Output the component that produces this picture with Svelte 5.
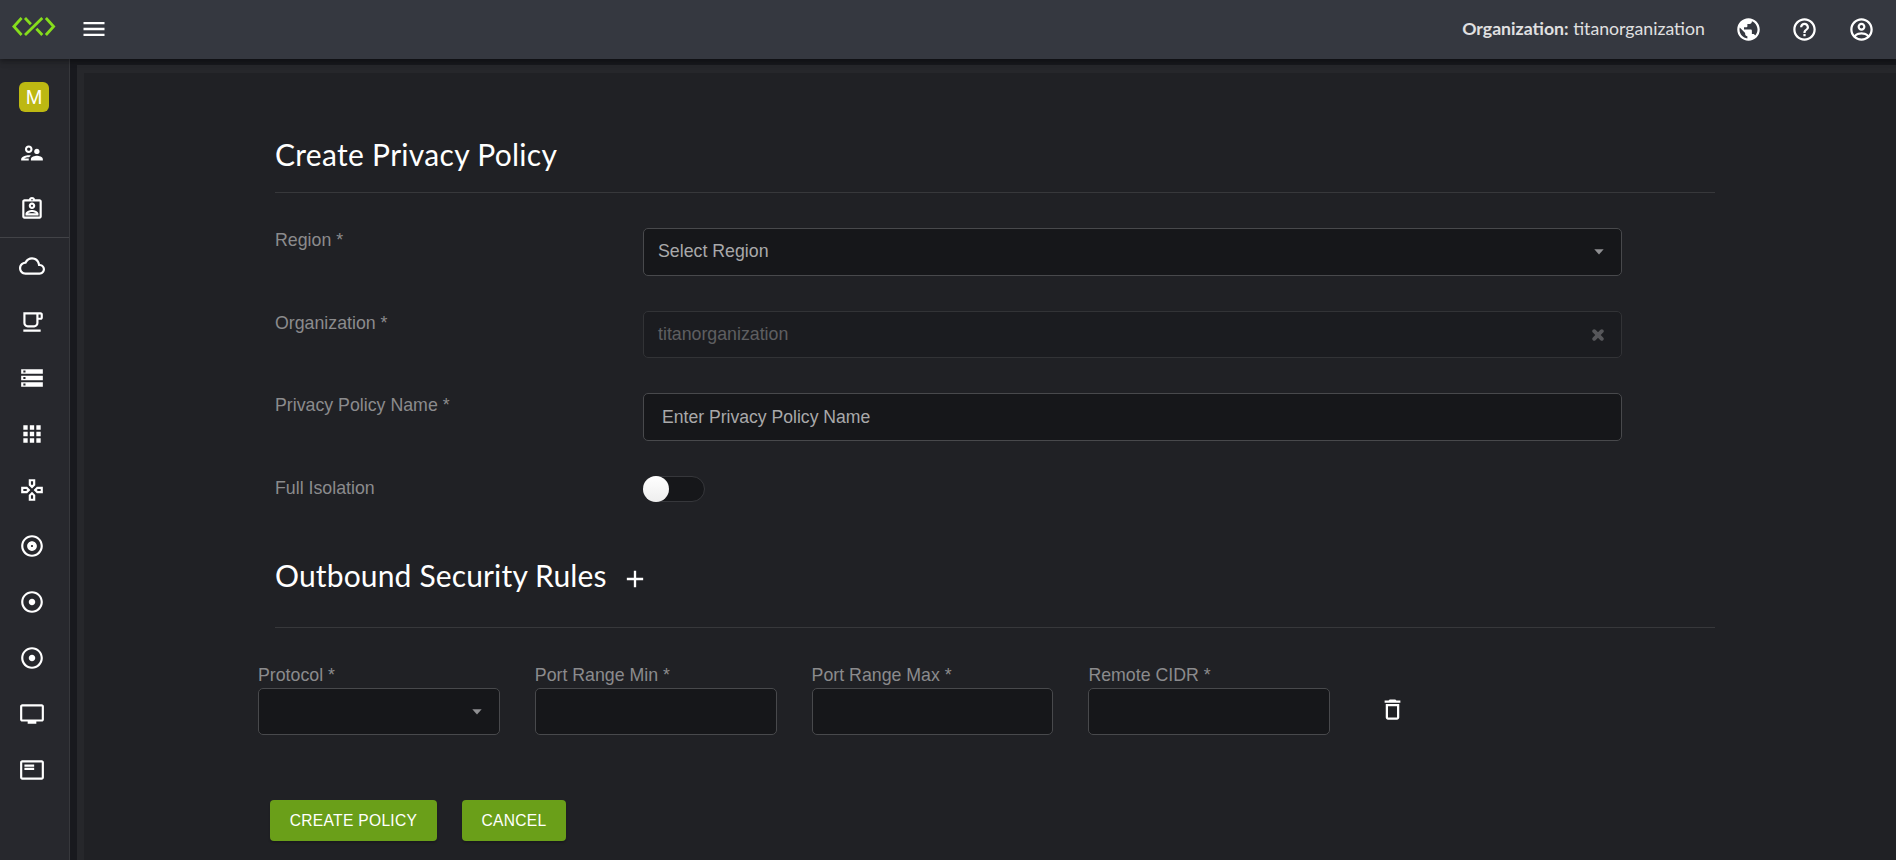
<script>
  const ring = 'M12 2C6.48 2 2 6.48 2 12s4.48 10 10 10 10-4.48 10-10S17.52 2 12 2zm0 18c-4.41 0-8-3.59-8-8s3.59-8 8-8 8 3.59 8 8-3.59 8-8 8z';
  const adjust = ring + 'M12 9c-1.66 0-3 1.34-3 3s1.34 3 3 3 3-1.34 3-3-1.34-3-3-3z';
  const topItems = [
    'M9 12c1.93 0 3.5-1.57 3.5-3.5S10.93 5 9 5 5.5 6.57 5.5 8.5 7.07 12 9 12zm0-5c.83 0 1.5.67 1.5 1.5S9.83 10 9 10s-1.5-.67-1.5-1.5S8.17 7 9 7zm.05 10H4.77c.99-.5 2.7-1 4.23-1 .11 0 .23.01.34.01.34-.73.93-1.33 1.64-1.81-.73-.13-1.42-.2-1.98-.2-2.34 0-7 1.17-7 3.5V19h7v-1.5c0-.17.02-.34.05-.5zm7.45-2.5c-1.84 0-5.5 1.01-5.5 3V19h11v-1.5c0-1.99-3.66-3-5.5-3zm1.21-1.82c.76-.43 1.29-1.24 1.29-2.18C19 9.12 17.88 8 16.5 8S14 9.12 14 10.5c0 .94.53 1.75 1.29 2.18.36.2.77.32 1.21.32s.85-.12 1.21-.32z',
    'M12 6c-1.65 0-3 1.35-3 3s1.35 3 3 3 3-1.35 3-3-1.35-3-3-3zm0 4c-.55 0-1-.45-1-1s.45-1 1-1 1 .45 1 1-.45 1-1 1zM19 3h-4.18C14.4 1.84 13.3 1 12 1s-2.4.84-2.82 2H5c-1.1 0-2 .9-2 2v14c0 1.1.9 2 2 2h14c1.1 0 2-.9 2-2V5c0-1.1-.9-2-2-2zm-7-.25c.41 0 .75.34.75.75s-.34.75-.75.75-.75-.34-.75-.75.34-.75.75-.75zM19 19H5V5h14v14zM6 16.47V18h12v-1.53c0-2.5-3.97-3.58-6-3.58s-6 1.07-6 3.58zM8.31 16c.69-.56 2.38-1.12 3.69-1.12s3.01.56 3.69 1.12H8.31z'
  ];
  const items = [
    'M19.35 10.04C18.67 6.59 15.64 4 12 4 9.11 4 6.6 5.64 5.35 8.04 2.34 8.36 0 10.91 0 14c0 3.31 2.69 6 6 6h13c2.76 0 5-2.24 5-5 0-2.64-2.05-4.78-4.65-4.96zM19 18H6c-2.21 0-4-1.79-4-4 0-2.05 1.53-3.76 3.56-3.97l1.07-.11.5-.95C8.08 7.14 9.94 6 12 6c2.62 0 4.88 1.86 5.39 4.43l.3 1.5 1.53.11c1.56.1 2.78 1.41 2.78 2.96 0 1.65-1.35 3-3 3z',
    'M16 5v8c0 1.1-.9 2-2 2H8c-1.1 0-2-.9-2-2V5h10m4-2H4v10c0 2.21 1.79 4 4 4h6c2.21 0 4-1.79 4-4v-3h2c1.11 0 2-.89 2-2V5c0-1.11-.89-2-2-2zm-2 5V5h2v3h-2zm2 11H4v2h16v-2z',
    'M2 20h20v-4H2v4zm2-3h2v2H4v-2zM2 4v4h20V4H2zm4 3H4V5h2v2zm-4 7h20v-4H2v4zm2-3h2v2H4v-2z',
    'M4 8h4V4H4v4zm6 12h4v-4h-4v4zm-6 0h4v-4H4v4zm0-6h4v-4H4v4zm6 0h4v-4h-4v4zm6-10v4h4V4h-4zm-6 4h4V4h-4v4zm6 6h4v-4h-4v4zm0 6h4v-4h-4v4z',
    'M13 4v2.67l-1 1-1-1V4h2m7 7v2h-2.67l-1-1 1-1H20M6.67 11l1 1-1 1H4v-2h2.67M12 16.33l1 1V20h-2v-2.67l1-1M15 2H9v5.5l3 3 3-3V2zm7 7h-5.5l-3 3 3 3H22V9zM7.5 9H2v6h5.5l3-3-3-3zm4.5 4.5l-3 3V22h6v-5.5l-3-3z',
    ring + 'M12 7.5c-2.49 0-4.5 2.01-4.5 4.5s2.01 4.5 4.5 4.5 4.5-2.01 4.5-4.5-2.01-4.5-4.5-4.5zm0 5.5c-.55 0-1-.45-1-1s.45-1 1-1 1 .45 1 1-.45 1-1 1z',
    adjust,
    adjust,
    'M21 3H3c-1.1 0-2 .9-2 2v12c0 1.1.9 2 2 2h5v2h8v-2h5c1.1 0 1.99-.9 1.99-2L23 5c0-1.1-.9-2-2-2zm0 14H3V5h18v12z',
    'M21 3H3c-1.1 0-2 .9-2 2v14c0 1.1.9 2 2 2h18c1.1 0 2-.9 2-2V5c0-1.1-.9-2-2-2zm0 16H3V5h18v14zM5 10h9v2H5zm0-3h9v2H5z'
  ];
  const actions = [
    'M12 2C6.48 2 2 6.48 2 12s4.48 10 10 10 10-4.48 10-10S17.52 2 12 2zm-1 17.93c-3.95-.49-7-3.85-7-7.93 0-.62.08-1.21.21-1.79L9 15v1c0 1.1.9 2 2 2v1.93zm6.9-2.54c-.26-.81-1-1.39-1.9-1.39h-1v-3c0-.55-.45-1-1-1H8v-2h2c.55 0 1-.45 1-1V7h2c1.1 0 2-.9 2-2v-.41c2.93 1.19 5 4.06 5 7.41 0 2.08-.8 3.97-2.1 5.39z',
    ring + 'M11 18h2v-2h-2v2zM12 6c-2.21 0-4 1.79-4 4h2c0-1.1.9-2 2-2s2 .9 2 2c0 2-3 1.75-3 5h2c0-2.25 3-2.5 3-5 0-2.21-1.79-4-4-4z',
    'M12 2C6.48 2 2 6.48 2 12s4.48 10 10 10 10-4.48 10-10S17.52 2 12 2zM7.07 18.28c.43-.9 3.05-1.78 4.93-1.78s4.51.88 4.93 1.78C15.57 19.36 13.86 20 12 20s-3.57-.64-4.93-1.72zm11.29-1.45c-1.43-1.74-4.9-2.33-6.36-2.33s-4.93.59-6.36 2.33C4.62 15.49 4 13.82 4 12c0-4.41 3.59-8 8-8s8 3.59 8 8c0 1.82-.62 3.49-1.64 4.83zM12 6c-1.94 0-3.5 1.56-3.5 3.5S10.06 13 12 13s3.5-1.56 3.5-3.5S13.94 6 12 6zm0 5c-.83 0-1.5-.67-1.5-1.5S11.17 8 12 8s1.5.67 1.5 1.5S12.83 11 12 11z'
  ];
  const ruleFields = ['Protocol *', 'Port Range Min *', 'Port Range Max *', 'Remote CIDR *'];
</script>

{#snippet icon(d, size)}
  <svg class="icon" width={size} height={size} viewBox="0 0 24 24"><path fill-rule="evenodd" {d} /></svg>
{/snippet}
{#snippet caret()}
  <svg class="caret" width="10" height="6" viewBox="0 0 10 6"><path d="M.3.2h9.4L5 5.6z" fill="#8f8f92" /></svg>
{/snippet}

<div class="app">
  <header>
    <svg class="logo" width="44" height="20" viewBox="0 0 44 20" fill="none" stroke="#86dd1c" stroke-width="2.8">
      <path d="M9.6 1 1.9 9.5l7.7 8.5M33.9 1l7.7 8.5-7.7 8.5M13 1l5.9 6.2M30.3 1 13 18M24.4 11.8l5.9 6.2" />
    </svg>
    <span class="menu">{@render icon('M3 18h18v-2H3v2zm0-5h18v-2H3v2zm0-7v2h18V6H3z', 28)}</span>
    <div class="org"><b>Organization:</b> titanorganization</div>
    <div class="actions">
      {#each actions as d}{@render icon(d, 27)}{/each}
    </div>
  </header>
  <div class="body">
    <nav>
      <div class="group top">
        <div class="item"><span class="avatar">M</span></div>
        {#each topItems as d}<div class="item">{@render icon(d, 26)}</div>{/each}
      </div>
      <div class="group">
        {#each items as d}<div class="item">{@render icon(d, 26)}</div>{/each}
      </div>
    </nav>
    <main>
      <div class="panel">
        <h2><span>Create Privacy Policy</span></h2>
        <div class="row">
          <label for="region">Region *</label>
          <div class="box" id="region"><span>Select Region</span>{@render caret()}</div>
        </div>
        <div class="row second">
          <label for="org">Organization *</label>
          <div class="box disabled" id="org">
            <span>titanorganization</span>
            <svg class="clear" width="12" height="12" viewBox="0 0 12 12"><path d="M2.2 2.2l7.6 7.6M9.8 2.2 2.2 9.8" stroke="#98989a" stroke-width="3.8" stroke-linecap="round" /></svg>
          </div>
        </div>
        <div class="row third">
          <label for="name">Privacy Policy Name *</label>
          <div class="box name" id="name"><span>Enter Privacy Policy Name</span></div>
        </div>
        <div class="row fourth">
          <label for="iso">Full Isolation</label>
          <div class="toggle" id="iso"><i></i></div>
        </div>
        <h2 class="rules"><span>Outbound Security Rules</span>{@render icon('M19 13h-6v6h-2v-6H5v-2h6V5h2v6h6v2z', 28)}</h2>
        <div class="ports">
          {#each ruleFields as label, i}
            <div class="field">
              <span class="cap">{label}</span>
              <div class="small">{#if i === 0}{@render caret()}{/if}</div>
            </div>
          {/each}
          <span class="trash">{@render icon('M6 19c0 1.1.9 2 2 2h8c1.1 0 2-.9 2-2V7H6v12zM8 9h8v10H8V9zm7.5-5l-1-1h-5l-1 1H5v2h14V4h-3.5z', 27)}</span>
        </div>
        <div class="buttons">
          <button class="create">CREATE POLICY</button>
          <button class="cancel">CANCEL</button>
        </div>
      </div>
    </main>
  </div>
</div>

<style>
  :global(body) { margin: 0; background: #18191e; overflow: hidden; }
  .app { height: 860px; display: flex; flex-direction: column; font-family: "Liberation Sans", Arial, sans-serif; color: #fff; overflow: hidden; }
  .app * { box-sizing: border-box; }
  .icon { display: block; fill: #fff; flex: none; }
  header { height: 59px; flex: none; background: #353840; display: flex; align-items: center; padding: 0 21.5px 1px 12px; position: relative; z-index: 1; box-shadow: 0 2px 4px -1px rgba(0,0,0,.2), 0 4px 5px rgba(0,0,0,.14), 0 1px 10px rgba(0,0,0,.12); }
  .logo { margin-bottom: 4px; }
  .menu { margin-left: 23.5px; }
  .org { margin-left: auto; font: 17.7px/24px Lato, sans-serif; color: #e0e0e1; margin-right: 30px; white-space: nowrap; }
  .org b { font-weight: 700; }
  .actions { display: flex; gap: 29.3px; }
  .body { flex: 1; display: flex; min-height: 0; }
  nav { width: 70px; flex: none; background: #27282d; border-right: 1px solid #37383c; }
  .top { height: 179px; padding-top: 10px; border-bottom: 1px solid #424347; }
  .item { height: 56px; padding-left: 19px; display: flex; align-items: center; }
  .avatar { width: 30px; height: 30px; border-radius: 6px; background: #bdb812; font-size: 20px; line-height: 30px; text-align: center; }
  main { flex: 1; margin: 6px 0 0 7px; padding: 8px 0 0 7px; background: #26272b; }
  .panel { height: 100%; background: #202125; padding: 63px 181px 0 191px; }
  h2 { height: 57px; margin: 0; border-bottom: 1px solid #37383b; display: flex; font: 400 30px/36px Lato, sans-serif; letter-spacing: .3px; }
  .row { display: flex; height: 48px; margin-top: 35px; padding-right: 93px; font-size: 17.75px; }
  label { width: 368px; flex: none; color: #8b8b8d; line-height: 24px; }
  .box { flex: 1; height: 48px; border: 1px solid #48494c; border-radius: 5px; background: #16171a; display: flex; align-items: center; justify-content: space-between; padding: 0 17px 1px 14px; color: #a9a9aa; }
  .second, .second .box { height: 47px; }
  .second .box { padding-bottom: 0; }
  .disabled { opacity: .45; }
  .name { padding-left: 18px; padding-bottom: 0; font-size: 17.6px; }
  .fourth { height: 26px; }
  .toggle { width: 62px; height: 26px; border-radius: 13px; background: #16171a; border: 1px solid #36373b; }
  .toggle i { display: block; width: 26px; height: 26px; margin: -1px; border-radius: 50%; background: linear-gradient(#fff, #eee); }
  .rules { margin-top: 55px; height: 71px; letter-spacing: .15px; }
  .rules .icon { margin: 8px 0 0 14px; }
  .ports { display: flex; gap: 35px; margin: 35px 0 0 -17px; }
  .field { width: 241.8px; }
  .cap { display: block; height: 25px; line-height: 24px; font-size: 17.75px; color: #8b8b8d; white-space: nowrap; }
  .small { height: 47px; border: 1px solid #48494c; border-radius: 5px; background: #16171a; display: flex; align-items: center; justify-content: flex-end; padding-right: 17px; }
  .trash { margin: 33px 0 0 14px; }
  .buttons { display: flex; gap: 25px; margin: 65px 0 0 -5px; }
  button { height: 41px; padding: 0; border: 0; border-radius: 4px; background: #6a9f19; color: #fff; font: 15.6px "Liberation Sans", Arial, sans-serif; letter-spacing: .3px; box-shadow: 0 2px 2px rgba(0,0,0,.2); }
  .create { width: 167px; }
  .cancel { width: 104px; }
</style>
